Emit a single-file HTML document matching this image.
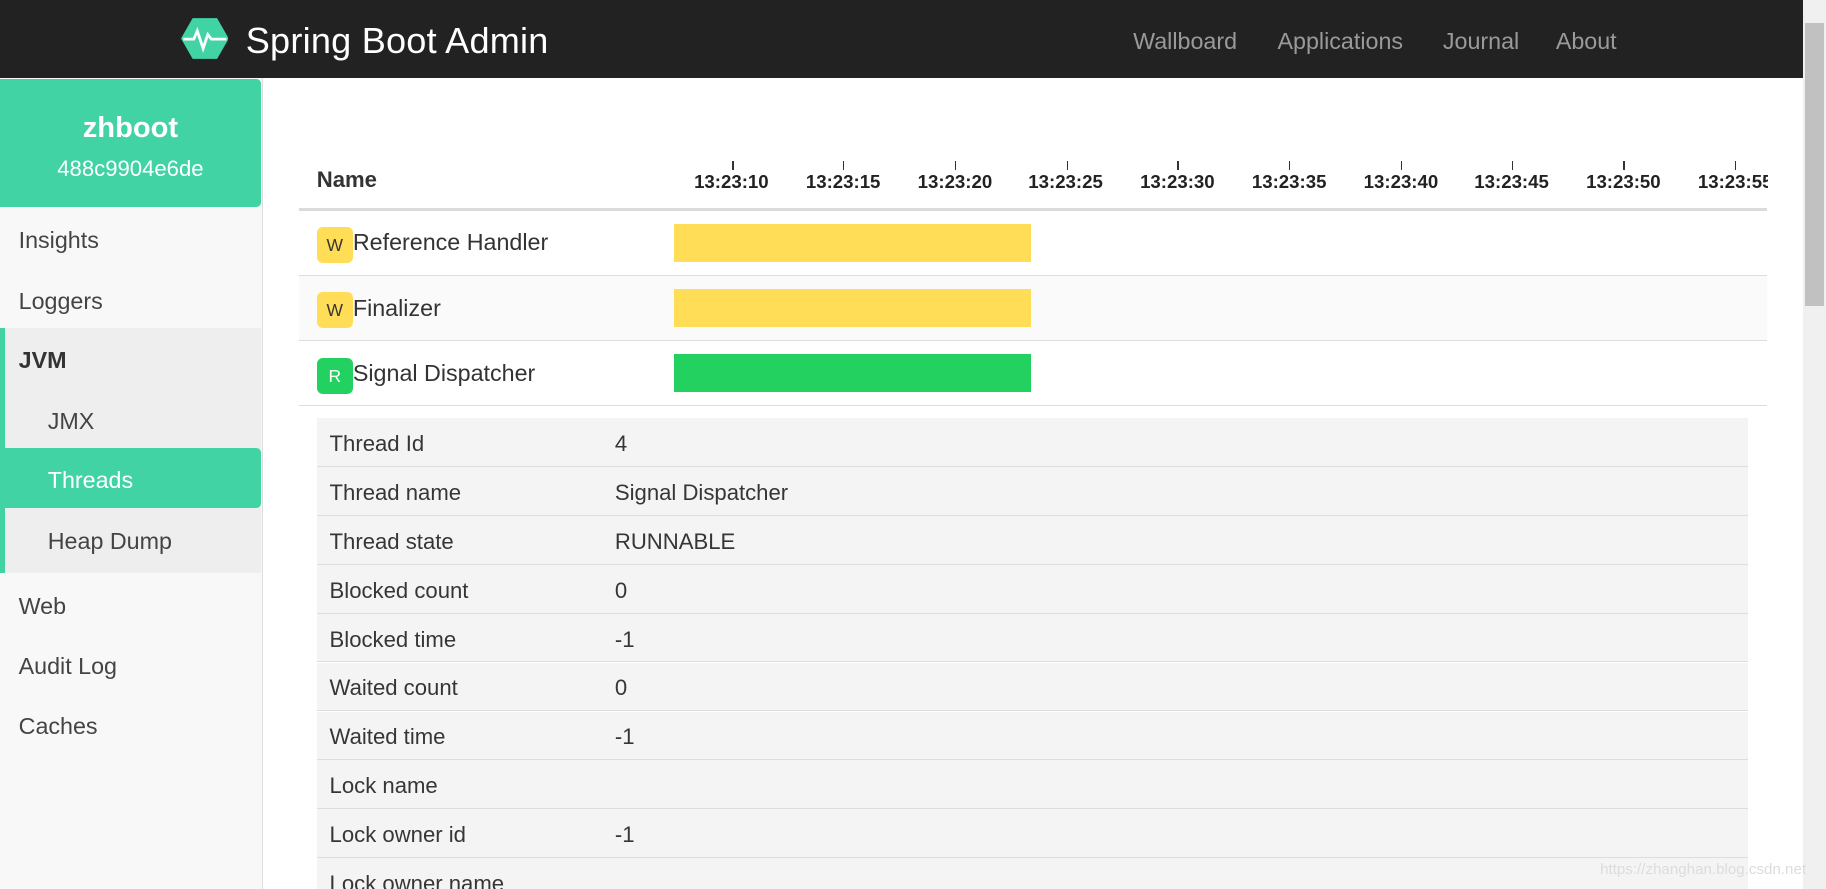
<!DOCTYPE html>
<html><head><meta charset="utf-8"><style>
html,body{margin:0;padding:0;overflow:hidden}
body{width:1568px;height:763px;zoom:1.16454;font-family:"Liberation Sans",sans-serif;color:#363636;background:#fff;position:relative}
.nav{position:absolute;left:0;top:0;width:1548px;height:67px;background:#222}
.title{position:absolute;left:211px;top:17px;color:#fff;font-size:31px;letter-spacing:0.2px}
.links a{position:absolute;top:24px;color:#9a9a9a;font-size:20px;text-decoration:none}
.scroll{position:absolute;left:1548px;top:0;width:20px;height:763px;background:#f0f0f0}
.thumb{position:absolute;left:1550px;top:20px;width:16px;height:243px;background:#c1c1c1}
.side{position:absolute;left:0;top:67px;width:225px;height:696px;background:#f8f8f8;border-right:1px solid #ddd}
.head{position:absolute;left:0;top:1px;width:224px;height:110px;background:#42d3a5;color:#fff;text-align:center;border-radius:0 4px 4px 0}
.side .it{position:absolute;left:16px;font-size:20px;color:#444}
.jvm{position:absolute;left:0;top:215px;width:224px;height:210px;background:#eee;border-left:5px solid #42d3a5;box-sizing:border-box}
.thr{position:absolute;left:0;top:318px;width:224px;height:51px;background:#42d3a5;border-radius:0 4px 4px 0}
.tick{position:absolute;top:147px;font-size:16px;font-weight:bold;color:#222}
.tm{position:absolute;top:138px;width:1px;height:8px;background:#333}
.row{position:absolute;left:257px;width:1260px;height:55px;border-bottom:1px solid #ddd}
.badge{position:absolute;left:15px;top:14px;width:31px;height:31px;border-radius:5px;font-size:15px;text-align:center;line-height:31px}
.rn{position:absolute;left:46px;top:16px;font-size:20px;color:#333}
.bar{position:absolute;left:322px;top:11px;width:306px;height:33px}
.dt{position:absolute;left:272px;width:1229px;height:41px;background:#f4f4f4;border-bottom:1px solid #ddd;font-size:19px;color:#363636}
.dt span{position:absolute;top:11px}
</style></head><body>
<div class="nav">
<svg style="position:absolute;left:155px;top:15px" width="41" height="37" viewBox="0 0 41 37"><polygon points="10,1 31,1 41,18.5 31,36 10,36 0,18.5" fill="#42d3a5"/><polyline points="2,19 11,19 14,12 19,27 23,15 26,19 39,19" fill="none" stroke="#fff" stroke-width="2.4"/></svg>
<div class="title">Spring Boot Admin</div>
<div class="links"><a style="left:973px">Wallboard</a><a style="left:1097px">Applications</a><a style="left:1239px">Journal</a><a style="left:1336px">About</a></div>
</div>
<div class="scroll"></div><div class="thumb"></div>
<div class="side">
<div class="head"><div style="position:absolute;top:28px;width:100%;font-size:25px;font-weight:bold">zhboot</div><div style="position:absolute;top:66px;width:100%;font-size:19px">488c9904e6de</div></div>
<div class="jvm"></div><div class="thr"></div>
<div class="it" style="top:128px">Insights</div>
<div class="it" style="top:180px">Loggers</div>
<div class="it" style="top:231px;font-weight:bold;color:#333">JVM</div>
<div class="it" style="top:283px;left:41px">JMX</div>
<div class="it" style="top:334px;left:41px;color:#fff">Threads</div>
<div class="it" style="top:386px;left:41px">Heap Dump</div>
<div class="it" style="top:442px">Web</div>
<div class="it" style="top:494px">Audit Log</div>
<div class="it" style="top:545px">Caches</div>
</div>
<div style="position:absolute;left:272px;top:143px;font-size:19px;font-weight:bold;color:#333">Name</div>
<div class="tm" style="left:629px"></div><div class="tick" style="left:596px">13:23:10</div>
<div class="tm" style="left:724px"></div><div class="tick" style="left:692px">13:23:15</div>
<div class="tm" style="left:820px"></div><div class="tick" style="left:788px">13:23:20</div>
<div class="tm" style="left:916px"></div><div class="tick" style="left:883px">13:23:25</div>
<div class="tm" style="left:1011px"></div><div class="tick" style="left:979px">13:23:30</div>
<div class="tm" style="left:1107px"></div><div class="tick" style="left:1075px">13:23:35</div>
<div class="tm" style="left:1203px"></div><div class="tick" style="left:1171px">13:23:40</div>
<div class="tm" style="left:1298px"></div><div class="tick" style="left:1266px">13:23:45</div>
<div class="tm" style="left:1394px"></div><div class="tick" style="left:1362px">13:23:50</div>
<div class="tm" style="left:1490px"></div><div style="position:absolute;left:1458px;top:147px;width:60px;overflow:hidden;white-space:nowrap;font-size:16px;font-weight:bold;color:#222">13:23:55</div>
<div style="position:absolute;left:257px;top:179px;width:1260px;height:2px;background:#dbdbdb"></div>
<div class="row" style="top:181px"><div class="badge" style="background:#ffdd57">W</div><div class="rn">Reference Handler</div><div class="bar" style="background:#ffdd57"></div></div>
<div class="row" style="top:237px;background:#fafafa"><div class="badge" style="background:#ffdd57">W</div><div class="rn">Finalizer</div><div class="bar" style="background:#ffdd57"></div></div>
<div class="row" style="top:293px"><div class="badge" style="background:#23d160;color:#fff">R</div><div class="rn">Signal Dispatcher</div><div class="bar" style="background:#23d160"></div></div>
<div class="dt" style="top:359px"><span style="left:11px">Thread Id</span><span style="left:256px">4</span></div>
<div class="dt" style="top:401px"><span style="left:11px">Thread name</span><span style="left:256px">Signal Dispatcher</span></div>
<div class="dt" style="top:443px"><span style="left:11px">Thread state</span><span style="left:256px">RUNNABLE</span></div>
<div class="dt" style="top:485px"><span style="left:11px">Blocked count</span><span style="left:256px">0</span></div>
<div class="dt" style="top:527px"><span style="left:11px">Blocked time</span><span style="left:256px">-1</span></div>
<div class="dt" style="top:569px"><span style="left:11px">Waited count</span><span style="left:256px">0</span></div>
<div class="dt" style="top:611px"><span style="left:11px">Waited time</span><span style="left:256px">-1</span></div>
<div class="dt" style="top:653px"><span style="left:11px">Lock name</span></div>
<div class="dt" style="top:695px"><span style="left:11px">Lock owner id</span><span style="left:256px">-1</span></div>
<div class="dt" style="top:737px"><span style="left:11px">Lock owner name</span></div>
<div style="position:absolute;left:1374px;top:739px;font-size:13px;color:#dcdcdc">https://zhanghan.blog.csdn.net</div>
</body></html>
